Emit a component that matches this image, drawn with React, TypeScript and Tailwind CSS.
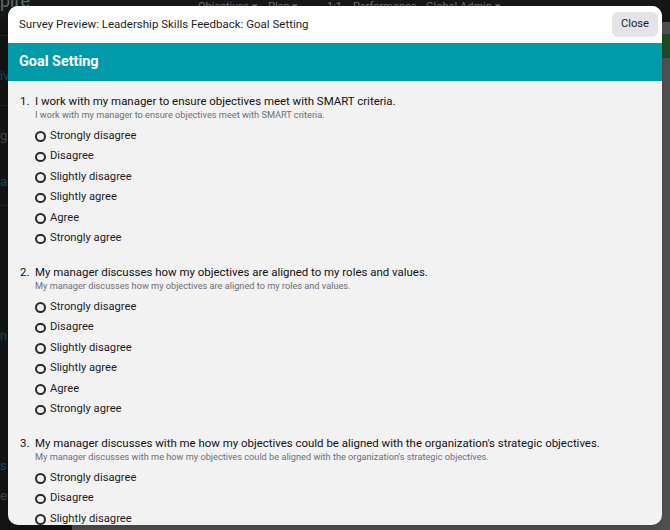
import React from 'react';

const OPTIONS = [
  'Strongly disagree',
  'Disagree',
  'Slightly disagree',
  'Slightly agree',
  'Agree',
  'Strongly agree',
];

const QUESTIONS = [
  {
    title: 'I work with my manager to ensure objectives meet with SMART criteria.',
    help: 'I work with my manager to ensure objectives meet with SMART criteria.',
  },
  {
    title: 'My manager discusses how my objectives are aligned to my roles and values.',
    help: 'My manager discusses how my objectives are aligned to my roles and values.',
  },
  {
    title: "My manager discusses with me how my objectives could be aligned with the organization's strategic objectives.",
    help: "My manager discusses with me how my objectives could be aligned with the organization's strategic objectives.",
  },
];

function Question({ n, title, help }: { n: number; title: string; help: string }) {
  return (
    <div className="mb-[15px]">
      <div className="flex text-[11.45px] leading-[16px] text-[#111113]">
        <span className="w-[15px] shrink-0">{n}.</span>
        <span>{title}</span>
      </div>
      <div className="pl-[15px] text-[9.2px] leading-[12px] text-[#6e6e73] mb-[5px]">{help}</div>
      <div className="flex flex-col pl-[15px]">
        {OPTIONS.map((o) => (
          <label key={o} className="flex items-center h-[20.5px] text-[11.2px] text-[#1d1d1f]">
            <span className="w-[10.5px] h-[10.5px] rounded-full border-2 border-[#2a2a2c] mr-[4.5px] shrink-0" />
            {o}
          </label>
        ))}
      </div>
    </div>
  );
}

export default function App() {
  return (
    <div
      className="relative w-[670px] h-[530px] overflow-hidden bg-[#4d4d4d]"
      style={{ fontFamily: 'Roboto, "Liberation Sans", sans-serif' }}
    >
      {/* Dimmed app behind the modal */}
      <div className="flex flex-col h-full">
        <div className="relative h-[22px] bg-[#161618] flex items-start pl-[198px] pt-[1px] text-[11px] text-[#6b6b70] leading-[12px]">
          <span className="text-[#5a6a6c] text-[18px] leading-[18px] absolute left-0 top-[-8px]">pire</span>
          <span className="w-[70px]">Objectives ▾</span>
          <span className="w-[59px]">Plan ▾</span>
          <span className="w-[26px]">1:1</span>
          <span className="w-[73px]">Performance</span>
          <span>Global Admin ▾</span>
        </div>
        <div className="flex flex-1">
          <div className="w-[72px] bg-[#121416] flex flex-col text-[13px] text-[#0e4c52]">
            <div className="h-[14px] border-b border-[#222]" />
            <div className="h-[70px] border-b border-[#222] pt-[30px]">iv</div>
            <div className="h-[60px] pt-[20px] text-[#444]">g</div>
            <div className="h-[40px] border-b border-[#222] pt-[6px]">ai</div>
            <div className="h-[120px]" />
            <div className="h-[30px]">n</div>
            <div className="h-[100px]" />
            <div className="h-[30px]">s</div>
            <div className="h-[40px] text-[#444]">en</div>
          </div>
          <div className="flex-1 bg-[#505050] flex flex-col items-end">
            <div className="mt-[12px] w-[8px] h-[24px] bg-[#1f4a23]" />
          </div>
        </div>
      </div>

      {/* Modal */}
      <div className="absolute left-[8px] top-[6px] w-[654px] h-[519px] rounded-[10px] overflow-hidden bg-[#f2f2f2] flex flex-col shadow-lg">
        <div className="h-[37px] bg-white flex items-center justify-between pl-[11px] pr-[4px] shrink-0">
          <span className="text-[11.5px] text-[#1d1d1f]">
            Survey Preview: Leadership Skills Feedback: Goal Setting
          </span>
          <button className="h-[25px] w-[46px] rounded-[6px] bg-[#e3e4e8] text-[11.2px] text-[#1d1d1f]">
            Close
          </button>
        </div>
        <div className="h-[38px] bg-[#009aa8] flex items-center pl-[11px] shrink-0">
          <span className="text-white font-bold text-[14.4px]">Goal Setting</span>
        </div>
        <div className="flex-1 overflow-hidden pt-[12px] pl-[12px] pr-[12px]">
          {QUESTIONS.map((q, i) => (
            <Question key={i} n={i + 1} title={q.title} help={q.help} />
          ))}
        </div>
      </div>
    </div>
  );
}
